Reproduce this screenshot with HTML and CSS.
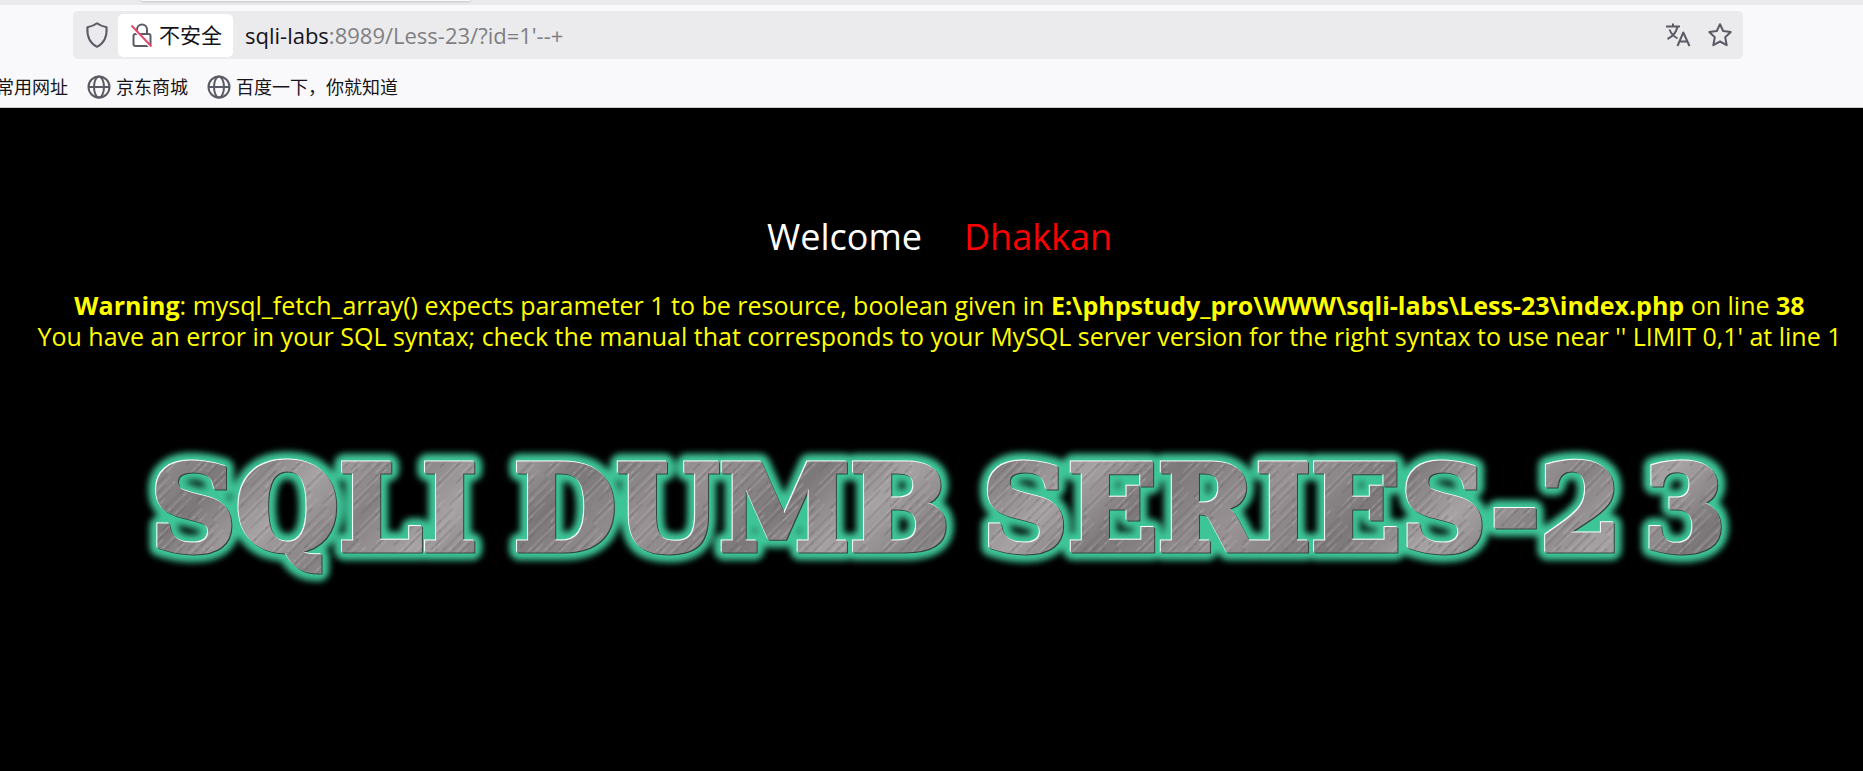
FILE: index.html
```html
<!DOCTYPE html>
<html lang="zh-CN">
<head>
<meta charset="utf-8">
<title>Less-23</title>
<link rel="stylesheet" href="styles.css">
</head>
<body>
<header class="chrome">
  <div class="tabstrip"><div class="tab"></div></div>
  <div class="urlbar">
    <button class="icon-btn shield" aria-label="Shield"><svg width="24" height="28" viewBox="0 0 24 28"><path d="M12 2.200 C9 4.600 5.500 5.600 2.400 6.300 C1.900 15 4 22 12 25.800 C20 22 22.100 15 21.600 6.300 C18.500 5.600 15 4.600 12 2.200Z"/></svg></button>
    <button class="identity"><svg width="24" height="28" viewBox="0 0 24 28"><path d="M7 13V8.500a5 5 0 0 1 10 0V13"/><rect x="3.500" y="13" width="17" height="12" rx="2"/><path class="halo" d="M2 6.500L21 27"/><path class="slash" d="M1.500 4.500L21.500 25.500"/></svg><span>不安全</span></button>
    <div class="address"><span class="host">sqli-labs</span>:8989/Less-23/?id=1'--+</div>
    <button class="icon-btn" aria-label="Translate"><svg width="26" height="26" viewBox="0 0 26 26"><path d="M1 4.500H15M8 1.500V4.500M12.500 4.500C11.500 10 7.500 14.500 2.500 17M4.500 7.500C6 11.500 9 14.500 12.500 16.500M12.500 24L18.300 10.500L24.500 24M14.500 19.500H22.500"/></svg></button>
    <button class="icon-btn" aria-label="Bookmark"><svg width="26" height="26" viewBox="0 0 26 26"><path d="M13 2.200L16.200 9L23.700 10L18.200 15.200L19.700 23.200L13 19.500L6.300 23.200L7.800 15.200L2.300 10L9.800 9Z"/></svg></button>
  </div>
  <nav class="bookmarks">
    <a href="#">常用网址</a>
    <a href="#"><svg width="24" height="26" viewBox="0 0 24 26"><circle cx="12" cy="13" r="10.500"/><ellipse cx="12" cy="13" rx="5" ry="10.500"/><path d="M1.500 13H22.500"/></svg>京东商城</a>
    <a href="#"><svg width="24" height="26" viewBox="0 0 24 26"><circle cx="12" cy="13" r="10.500"/><ellipse cx="12" cy="13" rx="5" ry="10.500"/><path d="M1.500 13H22.500"/></svg>百度一下，你就知道</a>
  </nav>
</header>
<main class="page">
  <h1 class="welcome"><span>Welcome</span><span class="name">Dhakkan</span></h1>
  <p class="message"><b>Warning</b>: mysql_fetch_array() expects parameter 1 to be resource, boolean given in <b>E:\phpstudy_pro\WWW\sqli-labs\Less-23\index.php</b> on line <b>38</b><br>You have an error in your SQL syntax; check the manual that corresponds to your MySQL server version for the right syntax to use near '' LIMIT 0,1' at line 1</p>
  <svg class="banner" viewBox="0 0 1630 150">
    <defs>
      <linearGradient id="metal" gradientUnits="userSpaceOnUse" x1="0" y1="0" x2="150" y2="150" spreadMethod="reflect">
        <stop offset="0" stop-color="#989294"/><stop offset=".4" stop-color="#7c7879"/><stop offset=".7" stop-color="#a6a1a2"/><stop offset="1" stop-color="#858081"/>
      </linearGradient>
      <pattern id="brush" width="23" height="90" patternUnits="userSpaceOnUse" patternTransform="rotate(45)">
        <path d="M2 0V60M9 0V30M14 20V80M19 50V90" stroke="#c4bcc0" stroke-opacity=".35"/>
        <path d="M5 10V70M12 10V45M16 40V90M21 0V40" stroke="#555053" stroke-opacity=".3"/>
      </pattern>
      <filter id="glow" x="-5%" y="-30%" width="110%" height="160%"><feGaussianBlur stdDeviation="3"/></filter>
      <g id="words">
        <text x="14" y="109">SQLI</text>
        <text x="383" y="109">DUMB</text>
        <text x="859" y="109">SERIES-2</text>
        <text x="1531" y="109">3</text>
      </g>
    </defs>
    <use href="#words" class="glow"/>
    <use href="#words" class="shade" x="1" y="1"/>
    <use href="#words" class="light" x="-1" y="-1"/>
    <use href="#words" class="metal"/>
    <use href="#words" class="brushed"/>
  </svg>
</main>
</body>
</html>
```
FILE: styles.css
```css
* { box-sizing: border-box; }
body {
  margin: 0;
  min-height: 100vh;
  display: flex;
  flex-direction: column;
  background: #000;
  font-family: "Open Sans", "Noto Sans CJK SC", sans-serif;
}
.chrome {
  background: #f9f9fb;
  border-bottom: 1px solid #ccc;
  overflow: hidden;
}
.tabstrip {
  height: 5px;
  padding-left: 142px;
  background: #eaeaec;
}
.tab {
  width: 328px;
  height: 1px;
  background: #f9f9fb;
  box-shadow: 0 0 3px #777;
}
.urlbar {
  display: flex;
  align-items: center;
  height: 48px;
  margin: 6px 120px 0 73px;
  padding: 0 10px 0 12px;
  background: #ebebed;
  border-radius: 5px;
}
button {
  display: flex;
  align-items: center;
  padding: 0;
  border: 0;
  background: none;
  font: inherit;
  color: #15141a;
}
svg { display: block; }
.chrome svg {
  flex: none;
  fill: none;
  stroke: #5b5b66;
  stroke-width: 2;
  stroke-linejoin: round;
}
.icon-btn { margin-left: 16px; }
.shield { margin: 0 9px 0 0; }
.identity {
  height: 43px;
  padding: 0 11px 0 12px;
  gap: 5px;
  background: #fff;
  border-radius: 5px;
  font-size: 21px;
  line-height: 28px;
}
.identity .halo { stroke: #fff; }
.identity .slash { stroke: #e8486c; }
.address {
  flex: 1;
  padding-left: 12px;
  font-size: 22px;
  line-height: 28px;
  color: #7f7f83;
}
.host { color: #15141a; font-weight: 500; }
.bookmarks {
  display: flex;
  align-items: center;
  gap: 19px;
  height: 48px;
  margin-left: -4px;
  padding-top: 8px;
}
.bookmarks a {
  display: flex;
  align-items: center;
  gap: 5px;
  white-space: nowrap;
  font-size: 18px;
  line-height: 26px;
  color: #15141a;
  text-decoration: none;
}
.page {
  flex: 1;
  padding: 104px 12px 0 28px;
  text-align: center;
}
.welcome {
  display: flex;
  justify-content: center;
  gap: 42px;
  margin: 0;
  font-size: 36px;
  font-weight: 400;
  line-height: 50px;
  color: #fff;
}
.name { color: #f00; }
.message {
  margin: 28px 0 0;
  font-size: 25px;
  line-height: 31px;
  color: #ff0;
}
.banner {
  width: 88%;
  margin: 91px auto 0;
  overflow: visible;
  font-family: "DejaVu Serif", serif;
  font-size: 120px;
  font-weight: 700;
}
.glow { fill: #3cc598; stroke: #3cc598; stroke-width: 21px; stroke-linejoin: round; filter: url(#glow); }
.shade { fill: #33433d; stroke: #33433d; stroke-width: 5px; }
.light { fill: #fff; stroke: #fff; stroke-width: 5px; }
.metal { fill: url(#metal); stroke: url(#metal); stroke-width: 5px; }
.brushed { fill: url(#brush); stroke: url(#brush); stroke-width: 5px; }
```
